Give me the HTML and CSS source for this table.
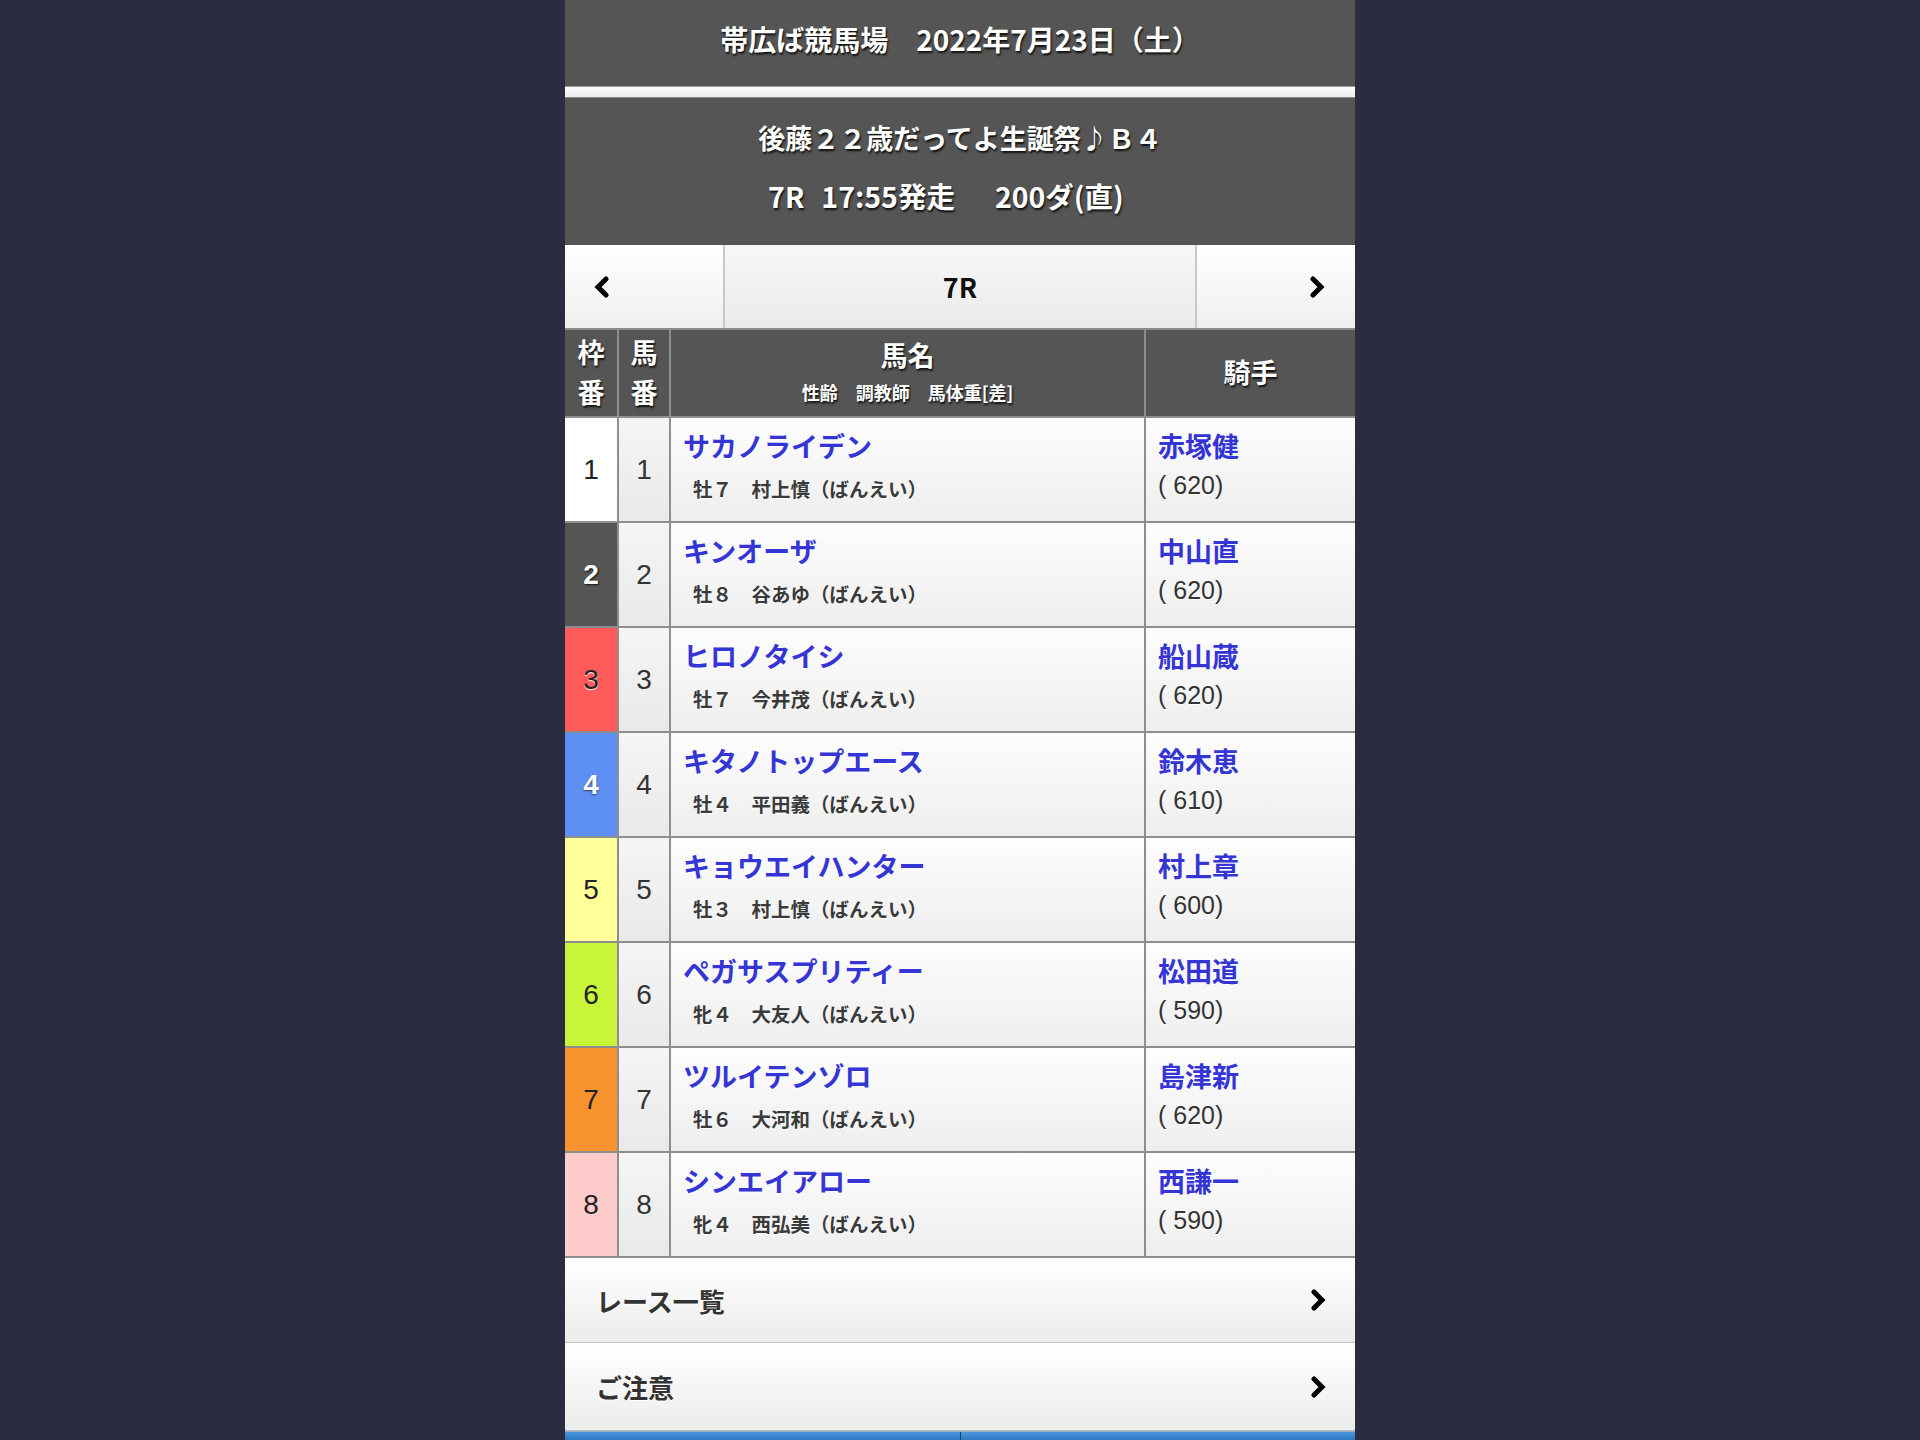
FILE: index.html
```html
<!DOCTYPE html>
<html lang="ja">
<head>
<meta charset="utf-8">
<title>帯広ば競馬場 7R</title>
<link rel="stylesheet" href="styles.css">
</head>
<body>
<div class="page">
  <header class="hd1">帯広ば競馬場<span class="gap30"></span>2022年7月23日（土）</header>
  <div class="sep"></div>
  <section class="hd2">
    <div class="line">後藤２２歳だってよ生誕祭♪Ｂ４</div>
    <div class="line l2">7R<span class="gap19"></span>17:55発走<span class="gap41"></span>200ダ(直)</div>
  </section>
  <nav class="racenav">
    <a class="nb prev"><svg width="16" height="22" viewBox="0 0 16 22"><polyline points="12,3 4,11 12,19" fill="none" stroke="#000" stroke-width="5" stroke-linecap="round"/></svg></a>
    <div class="nb cur">7R</div>
    <a class="nb next"><svg width="16" height="22" viewBox="0 0 16 22"><polyline points="4,3 12,11 4,19" fill="none" stroke="#000" stroke-width="5" stroke-linecap="round"/></svg></a>
  </nav>
  <div class="table">
    <div class="th stack"><span>枠</span><span>番</span></div>
    <div class="th stack"><span>馬</span><span>番</span></div>
    <div class="th stack2"><span class="big">馬名</span><span class="small">性齢　調教師　馬体重[差]</span></div>
    <div class="th">騎手</div>

    <div class="f f1">1</div><div class="u">1</div>
    <div class="hc"><a class="hn">サカノライデン</a><span class="sub">牡７　村上慎（ばんえい）</span></div>
    <div class="jc"><a class="jn">赤塚健</a><span class="wt">( 620)</span></div>

    <div class="f f2">2</div><div class="u">2</div>
    <div class="hc"><a class="hn">キンオーザ</a><span class="sub">牡８　谷あゆ（ばんえい）</span></div>
    <div class="jc"><a class="jn">中山直</a><span class="wt">( 620)</span></div>

    <div class="f f3">3</div><div class="u">3</div>
    <div class="hc"><a class="hn">ヒロノタイシ</a><span class="sub">牡７　今井茂（ばんえい）</span></div>
    <div class="jc"><a class="jn">船山蔵</a><span class="wt">( 620)</span></div>

    <div class="f f4">4</div><div class="u">4</div>
    <div class="hc"><a class="hn">キタノトップエース</a><span class="sub">牡４　平田義（ばんえい）</span></div>
    <div class="jc"><a class="jn">鈴木恵</a><span class="wt">( 610)</span></div>

    <div class="f f5">5</div><div class="u">5</div>
    <div class="hc"><a class="hn">キョウエイハンター</a><span class="sub">牡３　村上慎（ばんえい）</span></div>
    <div class="jc"><a class="jn">村上章</a><span class="wt">( 600)</span></div>

    <div class="f f6">6</div><div class="u">6</div>
    <div class="hc"><a class="hn">ペガサスプリティー</a><span class="sub">牝４　大友人（ばんえい）</span></div>
    <div class="jc"><a class="jn">松田道</a><span class="wt">( 590)</span></div>

    <div class="f f7">7</div><div class="u">7</div>
    <div class="hc"><a class="hn">ツルイテンゾロ</a><span class="sub">牡６　大河和（ばんえい）</span></div>
    <div class="jc"><a class="jn">島津新</a><span class="wt">( 620)</span></div>

    <div class="f f8">8</div><div class="u">8</div>
    <div class="hc"><a class="hn">シンエイアロー</a><span class="sub">牝４　西弘美（ばんえい）</span></div>
    <div class="jc"><a class="jn">西謙一</a><span class="wt">( 590)</span></div>
  </div>
  <ul class="links">
    <li><span>レース一覧</span><svg width="16" height="22" viewBox="0 0 16 22"><polyline points="4,3 12,11 4,19" fill="none" stroke="#000" stroke-width="5" stroke-linecap="round"/></svg></li>
    <li><span>ご注意</span><svg width="16" height="22" viewBox="0 0 16 22"><polyline points="4,3 12,11 4,19" fill="none" stroke="#000" stroke-width="5" stroke-linecap="round"/></svg></li>
  </ul>
  <div class="tabbar"><div class="tab"></div><div class="tab"></div></div>
</div>
</body>
</html>
```
FILE: styles.css
```css
html, body {
  margin: 0;
  padding: 0;
}
body {
  background: #2b2c41;
  font-family: "Noto Sans CJK JP", "Noto Sans", sans-serif;
  color: #333;
}
.page {
  width: 790px;
  margin: 0 auto;
  height: 1440px;
  overflow: hidden;
  background: #f4f4f4;
}
.hd1 {
  background: #555;
  height: 86px;
  line-height: 78px;
  text-align: center;
  color: #fff;
  font-size: 28px;
  font-weight: bold;
  text-shadow: 1px 2px 2px #111;
}
.gap30 { display: inline-block; width: 28px; }
.gap19 { display: inline-block; width: 17px; }
.gap41 { display: inline-block; width: 40px; }
.sep {
  height: 10px;
  background: linear-gradient(#fbfbfb, #ececec);
  border-top: 1px solid #9a9a9a;
  border-bottom: 1px solid #8a8a8a;
}
.hd2 {
  background: #555;
  height: 147px;
  box-sizing: border-box;
  padding-top: 11px;
  color: #fff;
  font-size: 27px;
  font-weight: bold;
  text-shadow: 1px 2px 2px #111;
  text-align: center;
}
.hd2 .line {
  height: 58px;
  line-height: 58px;
}
.hd2 .l2 {
  font-size: 28.5px;
  padding-right: 28px;
}
.racenav {
  display: flex;
  height: 83px;
  border-bottom: 2px solid #8c8c8c;
}
.nb {
  display: flex;
  align-items: center;
  background: linear-gradient(#ffffff, #efefef);
  box-sizing: border-box;
}
.prev {
  width: 158px;
  padding-left: 29px;
}
.next {
  width: 158px;
  justify-content: flex-end;
  padding-right: 30px;
}
.cur {
  flex: 1;
  justify-content: center;
  border-left: 2px solid #c8c8c8;
  border-right: 2px solid #c8c8c8;
  background: linear-gradient(#f7f7f7, #ebebeb);
  font-size: 27px;
  font-weight: bold;
  color: #111;
  text-shadow: 0 1px 0 #fff;
}
.table {
  display: grid;
  grid-template-columns: 52px 50px 473px 209px;
  grid-template-rows: 86px;
  grid-auto-rows: 103px;
  gap: 2px;
  padding-bottom: 2px;
  background: #8e8e8e;
}
.th {
  background: #555;
  color: #fff;
  font-weight: bold;
  font-size: 27px;
  text-shadow: 1px 2px 2px #111;
  display: flex;
  align-items: center;
  justify-content: center;
  padding-bottom: 3px;
  box-sizing: border-box;
}
.th.stack {
  flex-direction: column;
  line-height: 40px;
}
.th.stack2 {
  flex-direction: column;
}
.th .big {
  line-height: 40px;
}
.th .small {
  font-size: 18px;
  line-height: 34px;
}
.f, .u {
  display: flex;
  align-items: center;
  justify-content: center;
  font-family: "Liberation Sans", "Noto Sans", sans-serif;
  font-size: 28px;
  color: #222;
}
.u {
  background: linear-gradient(#f5f5f5, #e9e9e9);
  color: #333;
}
.f1 { background: #ffffff; }
.f2 { background: #555555; color: #fff; font-weight: bold; text-shadow: 1px 1px 2px #111; }
.f3 { background: #ff5b5b; text-shadow: 0 1px 1px #fff; }
.f4 { background: #5e8ff5; color: #fff; font-weight: bold; text-shadow: 0 1px 2px #345; }
.f5 { background: #ffff99; }
.f6 { background: #c8f53a; }
.f7 { background: #f8922f; }
.f8 { background: #ffcccc; }
.hc, .jc {
  background: linear-gradient(#fdfdfd, #eeeeee);
  display: flex;
  flex-direction: column;
  padding: 11px 0 0 12px;
  text-shadow: 0 1px 0 #fff;
}
.hn, .jn {
  color: #3535d6;
  font-size: 27px;
  font-weight: bold;
  line-height: 34px;
}
.sub {
  margin-top: 11px;
  padding-left: 10px;
  font-size: 19.5px;
  font-weight: bold;
  line-height: 30px;
  color: #3a3a3a;
}
.wt {
  margin-top: 7px;
  font-family: "Liberation Sans", "Noto Sans", sans-serif;
  font-size: 25px;
  line-height: 30px;
  color: #333;
}
.links {
  list-style: none;
  margin: 0;
  padding: 0;
}
.links li {
  display: flex;
  align-items: center;
  justify-content: space-between;
  height: 85px;
  box-sizing: border-box;
  padding: 0 29px 0 31px;
  background: linear-gradient(#ffffff, #ececec);
  border-bottom: 1px solid #c4c4c4;
  font-size: 26px;
  font-weight: bold;
  color: #333;
  text-shadow: 0 1px 0 #fff;
}
.links li + li {
  height: 88px;
  border-bottom: 1px solid #bbb;
}
.tabbar {
  display: flex;
  height: 12px;
  border-top: 1px solid #9ab;
}
.tab {
  flex: 1;
  background: linear-gradient(#4b95dc, #1f6cb9);
}
.tab + .tab {
  border-left: 1px solid #0d3e70;
}
```
